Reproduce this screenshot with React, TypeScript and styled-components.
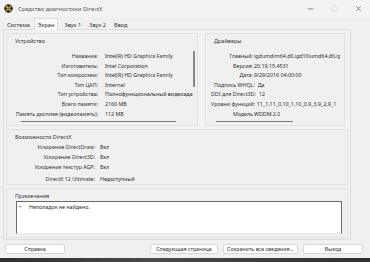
import React from "react";
import styled, { createGlobalStyle } from "styled-components";

const Global = createGlobalStyle`
  html, body { margin: 0; padding: 0; }
  body {
    width: 370px; height: 262px; overflow: hidden;
    background: #f0f0f0;
    font-family: "Noto Sans", "Open Sans", sans-serif;
    color: #2a2a2a;
  }
`;

const Window = styled.div`
  width: 370px; height: 262px;
  display: flex; flex-direction: column;
  background: #f0f0f0;
`;

const TitleBar = styled.div`
  height: 17px; display: flex; align-items: center;
  padding-left: 4px; background: #f3f3f3;
`;
const TitleText = styled.span`
  font-size: 5.8px; color: #555; margin-left: 5px; flex: 1;
`;
const Controls = styled.div`
  display: flex; align-items: center; height: 100%;
`;
const Ctrl = styled.div<{ $faint?: boolean }>`
  width: 24px; height: 100%; display: flex; align-items: center; justify-content: center;
  color: ${(p) => (p.$faint ? "#cfcfcf" : "#666")};
`;

const Tabs = styled.div`
  height: 12px; display: flex; align-items: flex-end; padding-left: 3px;
`;
const Tab = styled.div<{ $active?: boolean }>`
  height: ${(p) => (p.$active ? 11 : 10)}px;
  padding: 0 3px; margin-right: ${(p) => (p.$active ? 2 : 0)}px;
  display: flex; align-items: center;
  font-size: 5.6px; color: #333;
  background: ${(p) => (p.$active ? "#f9f9f9" : "transparent")};
  border: 1px solid ${(p) => (p.$active ? "#dcdcdc" : "transparent")};
  border-bottom: none;
  position: relative; top: 1px;
`;

const Panel = styled.div`
  margin: 0 19px 0 3px;
  height: 211px; box-sizing: border-box;
  border: 1px solid #dcdcdc; background: #f2f2f2;
  padding: 3px 2px 0 2px;
  display: flex; flex-direction: column; gap: 3px;
`;

const TopRow = styled.div`
  display: flex; gap: 7px;
`;

const Group = styled.div<{ $w?: number; $h: number }>`
  width: ${(p) => (p.$w ? `${p.$w}px` : "auto")};
  height: ${(p) => p.$h}px;
  box-sizing: border-box;
  border: 1px solid #e2e2e2;
  background: #f0f0f0;
  position: relative;
  display: flex; flex-direction: column;
  padding: 3px 0 0 8px;
`;
const GroupTitle = styled.div`
  font-size: 5.5px; color: #333; height: 8px; line-height: 8px;
`;

const Rows = styled.div<{ $top: number; $gap: number; $left: number }>`
  display: flex; flex-direction: column;
  margin-top: ${(p) => p.$top}px;
  margin-left: ${(p) => p.$left}px;
  gap: ${(p) => p.$gap}px;
`;
const Row = styled.div<{ $gap: number; $shift?: number; $extra?: number }>`
  display: flex; align-items: center; height: 7px;
  gap: ${(p) => p.$gap}px;
  margin-left: ${(p) => p.$shift ?? 0}px;
  margin-top: ${(p) => p.$extra ?? 0}px;
  font-size: 5.3px; white-space: nowrap; line-height: 7px;
`;
const Label = styled.span<{ $w?: number }>`
  width: ${(p) => (p.$w ? `${p.$w}px` : "auto")};
  flex: none; text-align: right; color: #333;
`;
const Value = styled.span<{ $max?: number }>`
  color: #2a2a2a; overflow: hidden; text-overflow: clip;
  max-width: ${(p) => (p.$max ? `${p.$max}px` : "none")};
`;

const VScroll = styled.div`
  position: absolute; left: 186px; top: 17px;
  width: 1.5px; height: 36px; background: #8a8a8a;
`;
const HScroll = styled.div<{ $left: number; $w: number }>`
  position: absolute; top: 87px; left: ${(p) => p.$left}px;
  width: ${(p) => p.$w}px; height: 1.3px; background: #7a7a7a;
`;

const NotesBox = styled.div`
  margin: 1px 5px 0 1px; height: 33px; box-sizing: border-box;
  background: #ffffff;
  border: 1px solid #6a6a6a; border-bottom-color: #e8e8e8;
  display: flex; align-items: flex-start; padding: 2px 0 0 2px;
  font-size: 5.3px; color: #2a2a2a; line-height: 7px;
`;
const Bullet = styled.span`
  width: 10px; flex: none;
`;

const ButtonBar = styled.div`
  display: flex; align-items: center; padding: 0 7px 0 5px;
  margin-top: 4px; height: 10px; gap: 5px;
`;
const Button = styled.div<{ $w: number; $push?: boolean }>`
  width: ${(p) => p.$w}px; height: 10px; box-sizing: border-box;
  background: #fdfdfd; border: 1px solid #d6d6d6; border-radius: 2px;
  display: flex; align-items: center; justify-content: center;
  font-size: 5.3px; color: #333;
  margin-left: ${(p) => (p.$push ? "auto" : "0")};
`;
const Taskbar = styled.div`
  margin-top: auto; height: 4px;
  background: linear-gradient(90deg, #2e2e2e, #4a4a4a 40%, #2f2f2f);
`;

const DxIcon = () => (
  <svg width="9" height="9" viewBox="0 0 20 20">
    <circle cx="10" cy="10" r="9.5" fill="#2b2b2b" />
    <path d="M5 5 L15 15" stroke="#e8c21a" strokeWidth="3.5" strokeLinecap="round" />
    <path d="M15 5 L5 15" stroke="#6cc04a" strokeWidth="3.5" strokeLinecap="round" />
    <circle cx="10" cy="10" r="2" fill="#d9412b" />
  </svg>
);

export default function App() {
  return (
    <Window>
      <Global />
      <TitleBar>
        <DxIcon />
        <TitleText>Средство диагностики DirectX</TitleText>
        <Controls>
          <Ctrl>
            <svg width="7" height="7" viewBox="0 0 10 10"><path d="M1 5.5 H9" stroke="#555" strokeWidth="0.9" /></svg>
          </Ctrl>
          <Ctrl $faint>
            <svg width="7" height="7" viewBox="0 0 10 10"><rect x="1.5" y="1.5" width="7" height="7" rx="1" fill="none" stroke="#d2d2d2" strokeWidth="0.9" /></svg>
          </Ctrl>
          <Ctrl>
            <svg width="7" height="7" viewBox="0 0 10 10"><path d="M1.5 1.5 L8.5 8.5 M8.5 1.5 L1.5 8.5" stroke="#555" strokeWidth="0.9" /></svg>
          </Ctrl>
        </Controls>
      </TitleBar>
      <Tabs>
        <Tab>Система</Tab>
        <Tab $active>Экран</Tab>
        <Tab>Звук 1</Tab>
        <Tab>Звук 2</Tab>
        <Tab>Ввод</Tab>
      </Tabs>
      <Panel>
        <TopRow>
          <Group $w={192} $h={93}>
            <GroupTitle>Устройство</GroupTitle>
            <Rows $top={8} $gap={2.6} $left={-3}>
              <Row $gap={7}><Label $w={86}>Название:</Label><Value $max={88}>Intel(R) HD Graphics Family</Value></Row>
              <Row $gap={7}><Label $w={86}>Изготовитель:</Label><Value $max={88}>Intel Corporation</Value></Row>
              <Row $gap={7}><Label $w={86}>Тип микросхем:</Label><Value $max={88}>Intel(R) HD Graphics Family</Value></Row>
              <Row $gap={7}><Label $w={86}>Тип ЦАП:</Label><Value $max={88}>Internal</Value></Row>
              <Row $gap={7}><Label $w={86}>Тип устройства:</Label><Value $max={88}>Полнофункциональный видеоадапт</Value></Row>
              <Row $gap={7}><Label $w={86}>Всего памяти:</Label><Value $max={88}>2160 MB</Value></Row>
              <Row $gap={7}><Label $w={86}>Память дисплея (видеопамять):</Label><Value $max={88}>112 MB</Value></Row>
            </Rows>
            <VScroll />
            <HScroll $left={14} $w={155} />
          </Group>
          <Group $w={140} $h={93}>
            <GroupTitle>Драйверы</GroupTitle>
            <Rows $top={8} $gap={2.6} $left={-3}>
              <Row $gap={1}><Label $w={42}>Главный:</Label><Value $max={86}>igdumdim64.dll,igd10iumd64.dll,igd10i</Value></Row>
              <Row $gap={1}><Label $w={42}>Версия:</Label><Value>20.19.15.4531</Value></Row>
              <Row $gap={1}><Label $w={42}>Дата:</Label><Value>9/29/2016 04:00:00</Value></Row>
              <Row $gap={3} $shift={3}><Label>Подпись WHQL:</Label><Value>Да</Value></Row>
              <Row $gap={3}><Label>DDI для Direct3D:</Label><Value>12</Value></Row>
              <Row $gap={1.5}><Label>Уровни функций:</Label><Value>11_1,11_0,10_1,10_0,9_3,9_2,9_1</Value></Row>
              <Row $gap={1}><Label $w={42}>Модель</Label><Value>WDDM 2.0</Value></Row>
            </Rows>
            <HScroll $left={10} $w={77} />
          </Group>
        </TopRow>
        <Group $h={56}>
          <GroupTitle>Возможности DirectX</GroupTitle>
          <Rows $top={3} $gap={3} $left={-3}>
            <Row $gap={5}><Label $w={83}>Ускорение DirectDraw:</Label><Value>Вкл</Value></Row>
            <Row $gap={5}><Label $w={83}>Ускорение Direct3D:</Label><Value>Вкл</Value></Row>
            <Row $gap={5}><Label $w={83}>Ускорение текстур AGP:</Label><Value>Вкл</Value></Row>
            <Row $gap={5} $extra={2}><Label $w={83}>DirectX 12 Ultimate:</Label><Value>Недоступный</Value></Row>
          </Rows>
        </Group>
        <Group $h={50}>
          <GroupTitle>Примечания</GroupTitle>
          <NotesBox>
            <Bullet>•</Bullet>
            <span>Неполадок не найдено.</span>
          </NotesBox>
        </Group>
      </Panel>
      <ButtonBar>
        <Button $w={60}>Справка</Button>
        <Button $w={68} $push>Следующая страница</Button>
        <Button $w={75}>Сохранить все сведения...</Button>
        <Button $w={60}>Выход</Button>
      </ButtonBar>
      <Taskbar />
    </Window>
  );
}
